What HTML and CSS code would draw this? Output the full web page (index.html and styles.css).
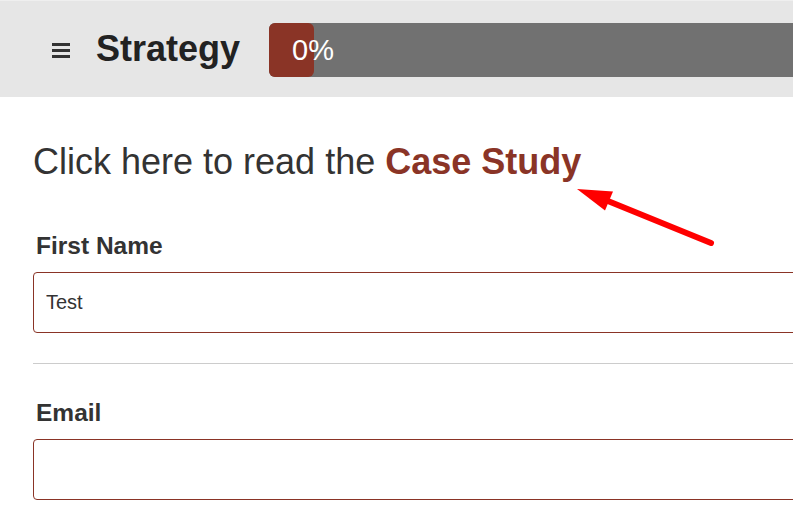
FILE: index.html
```html
<!DOCTYPE html>
<html lang="en">
<head>
<meta charset="utf-8">
<title>Strategy</title>
<link rel="stylesheet" href="styles.css">
</head>
<body>
<div class="page">
  <header class="topbar">
    <button class="menu-btn" aria-label="Menu">
      <svg width="18" height="15" viewBox="0 0 18 15">
        <rect x="0" y="0" width="18" height="3" fill="#333"/>
        <rect x="0" y="6" width="18" height="3" fill="#333"/>
        <rect x="0" y="12" width="18" height="3" fill="#333"/>
      </svg>
    </button>
    <h1 class="title">Strategy</h1>
    <div class="progress">
      <div class="progress-fill">0%</div>
    </div>
  </header>

  <main class="content">
    <h2 class="intro">Click here to read the <a class="case-link" href="#">Case Study</a></h2>

    <div class="field">
      <label class="field-label" for="fname">First Name</label>
      <input class="field-input" id="fname" type="text" value="Test">
    </div>

    <hr class="divider">

    <div class="field">
      <label class="field-label" for="email">Email</label>
      <input class="field-input" id="email" type="text" value="">
    </div>
  </main>

  <svg class="annotation" width="160" height="70" viewBox="560 180 160 70">
    <line x1="711" y1="243" x2="603" y2="199" stroke="#ff0000" stroke-width="6" stroke-linecap="round"/>
    <polygon points="577,189 613,191.5 605,210.5" fill="#ff0000"/>
  </svg>
</div>
</body>
</html>
```

FILE: styles.css
```css
html, body {
  margin: 0;
  padding: 0;
  overflow: hidden;
  background: #ffffff;
}

body {
  font-family: "Liberation Sans", Arial, sans-serif;
  color: #333333;
}

.page {
  position: relative;
  width: 1000px;
}

.topbar {
  display: flex;
  align-items: center;
  height: 96px;
  border-top: 1px solid #efefef;
  background: #e6e6e6;
  padding-left: 52px;
}

.menu-btn {
  border: 0;
  background: transparent;
  padding: 0;
  margin: 3px 26px 0 0;
  width: 18px;
  height: 15px;
  display: flex;
}

.title {
  margin: 0 30px 0 0;
  font-size: 36px;
  line-height: 40px;
  font-weight: bold;
  color: #222222;
}

.progress {
  flex: 1;
  height: 54px;
  margin-top: 2px;
  margin-left: -1px;
  background: #717171;
  border-radius: 6px;
  display: flex;
}

.progress-fill {
  width: 45px;
  box-sizing: border-box;
  padding-left: 23px;
  background: #8a3426;
  border-radius: 6px;
  color: #ffffff;
  font-size: 29px;
  line-height: 54px;
  white-space: nowrap;
}

.content {
  padding-left: 33px;
  padding-top: 45px;
}

.intro {
  margin: 0;
  font-size: 36px;
  line-height: 40px;
  font-weight: normal;
  color: #333333;
}

.case-link {
  color: #8a3426;
  font-weight: bold;
  text-decoration: none;
}

.field {
  display: flex;
  flex-direction: column;
}

.content .intro + .field {
  margin-top: 50px;
}

.field-label {
  font-size: 24.5px;
  line-height: 28px;
  font-weight: bold;
  color: #333333;
  padding-left: 3px;
  margin-bottom: 12px;
}

.field-input {
  box-sizing: border-box;
  height: 61px;
  width: 100%;
  border: 1px solid #8a3426;
  border-radius: 4px;
  padding: 0 12px;
  font-family: "Liberation Sans", Arial, sans-serif;
  font-size: 20px;
  color: #333333;
  background: #ffffff;
  outline: none;
}

.divider {
  border: 0;
  border-top: 1px solid #cccccc;
  margin: 30px 0 35px 0;
}

.annotation {
  position: absolute;
  left: 560px;
  top: 180px;
  pointer-events: none;
}
```
